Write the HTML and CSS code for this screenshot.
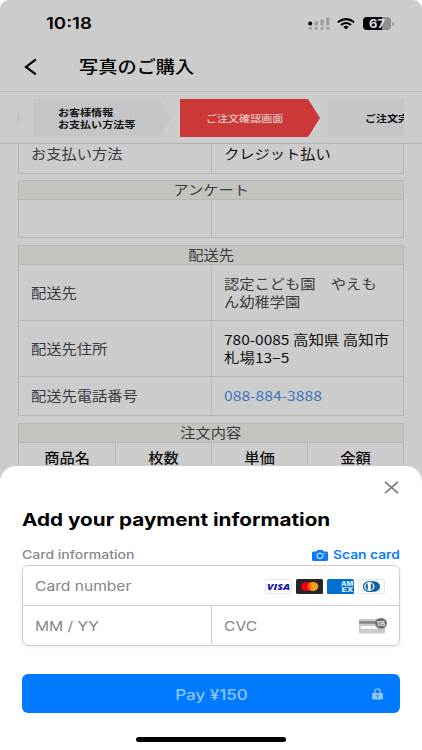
FILE: index.html
```html
<!DOCTYPE html>
<html lang="ja">
<head>
<meta charset="utf-8">
<title>写真のご購入</title>
<link rel="stylesheet" href="styles.css">
</head>
<body>
<div class="phone">
  <div class="page">
    <div class="status">
      <span class="time wide">10:18</span>
      <svg class="signal" width="22" height="14" viewBox="0 0 22 14"><circle cx="2.2" cy="6.4" r="2" fill="#000"/><g fill="#a0a0a0"><rect x="6.5" y="4" width="3.5" height="4.5" rx="1"/><rect x="12.3" y="2.5" width="3.5" height="6" rx="1"/><rect x="18" y=".5" width="3.5" height="8" rx="1"/><rect x=".5" y="10" width="3.5" height="2.7" rx="1"/><rect x="6.5" y="10" width="3.5" height="2.7" rx="1"/><rect x="12.3" y="10" width="3.5" height="2.7" rx="1"/><rect x="18" y="10" width="3.5" height="2.7" rx="1"/></g></svg>
      <svg class="wifi" width="18" height="12" viewBox="0 0 18 12"><g fill="none" stroke="#000" stroke-width="2"><path d="M.8 4.2Q9-2 17.2 4.2"/><path d="M3.9 7Q9 3 14.1 7"/></g><path d="M6.2 8.8Q9 6.7 11.8 8.8L9 11.5Z"/></svg>
      <div class="battery"><span>67</span></div><i class="cap"></i>
    </div>
    <div class="nav">
      <svg width="14" height="18" viewBox="0 0 14 18"><path d="M11.8 1.3 2 9l9.8 7.3" fill="none" stroke="#000" stroke-width="2.2"/></svg>
      <h1 class="wide">写真のご購入</h1>
    </div>
    <div class="steps">
      <div class="tail"></div>
      <div class="step done"><span class="wide">お客様情報<br>お支払い方法等</span></div>
      <div class="step now"><span class="wide">ご注文確認画面</span></div>
      <div class="step next"><span class="wide">ご注文完了</span></div>
    </div>
    <div class="content">
      <div class="grid first"><div class="cell"><span class="wide">お支払い方法</span></div><div class="cell dark"><span class="wide">クレジット払い</span></div></div>
      <div class="caption"><span class="wide">アンケート</span></div>
      <div class="grid empty"><div class="cell"></div><div class="cell"></div></div>
      <div class="caption"><span class="wide">配送先</span></div>
      <div class="grid tall"><div class="cell"><span class="wide">配送先</span></div><div class="cell"><span class="wide">認定こども園　やえも<br>ん幼稚学園</span></div></div>
      <div class="grid tall"><div class="cell"><span class="wide">配送先住所</span></div><div class="cell dark"><span class="wide">780-0085 高知県 高知市<br>札場13−5</span></div></div>
      <div class="grid tel"><div class="cell"><span class="wide">配送先電話番号</span></div><div class="cell link"><span class="wide">088-884-3888</span></div></div>
      <div class="caption"><span class="wide">注文内容</span></div>
      <div class="grid four"><div class="cell"><span class="wide">商品名</span></div><div class="cell"><span class="wide">枚数</span></div><div class="cell"><span class="wide">単価</span></div><div class="cell"><span class="wide">金額</span></div></div>
    </div>
  </div>
  <div class="sheet">
    <div class="close"><svg width="15" height="13" viewBox="0 0 15 13"><path d="M1 .8 14 12.2M14 .8 1 12.2" stroke="#77777b" stroke-width="1.6" fill="none"/></svg></div>
    <h2 class="wide">Add your payment information</h2>
    <div class="label">
      <span class="wide info">Card information</span>
      <span class="scan"><svg width="16" height="11" viewBox="0 0 16 11"><path d="M1.5 1.5H4.2L5.4 0H10.6L11.8 1.5H14.5Q16 1.5 16 3V9.5Q16 11 14.5 11H1.5Q0 11 0 9.5V3Q0 1.5 1.5 1.5Z" fill="#0a7aff"/><ellipse cx="8" cy="5.8" rx="3.1" ry="2.7" fill="none" stroke="#fff" stroke-width="1"/><circle cx="12.7" cy="3.5" r=".6" fill="#fff"/></svg><span class="wide">Scan card</span></span>
    </div>
    <div class="form">
      <div class="field number"><span class="wide">Card number</span>
        <div class="brands">
          <svg width="27" height="15" viewBox="0 0 27 15"><rect x=".5" y=".5" width="26" height="14" rx="1.5" fill="#fff" stroke="#e6e6ec"/><text x="2" y="11" textLength="23" lengthAdjust="spacingAndGlyphs" class="visa">VISA</text></svg>
          <svg width="27" height="15" viewBox="0 0 27 15"><rect width="27" height="15" rx="1.5" fill="#252525"/><ellipse cx="10.3" cy="7.5" rx="5.3" ry="4.6" fill="#eb001b"/><ellipse cx="17" cy="7.5" rx="5.3" ry="4.6" fill="#f79e1b"/><path d="M13.6 3.9Q17.5 7.5 13.6 11.1Q9.7 7.5 13.6 3.9Z" fill="#ff5f00"/></svg>
          <svg width="27" height="15" viewBox="0 0 27 15"><rect width="27" height="15" rx="1.5" fill="#016fd0"/><text x="14" y="6.9" textLength="12.3" lengthAdjust="spacingAndGlyphs" class="amex">AM</text><text x="14.5" y="12.6" textLength="12" lengthAdjust="spacingAndGlyphs" class="amex">EX</text></svg>
          <svg width="27" height="15" viewBox="0 0 27 15"><rect x=".5" y=".5" width="26" height="14" rx="1.5" fill="#fff" stroke="#e6e6ec"/><path d="M12.5 2.2H15C19 2.2 22 4.2 22 7.5S19 12.8 15 12.8H12.5Z" fill="#0862a4"/><ellipse cx="11.3" cy="7.5" rx="5.8" ry="5" fill="#fff" stroke="#0862a4" stroke-width="1.2"/><path d="M9.8 3.7Q5 7.5 9.8 11.3ZM12.8 3.7Q17.6 7.5 12.8 11.3Z" fill="#0862a4"/></svg>
        </div>
      </div>
      <div class="field"><span class="wide">MM / YY</span></div>
      <div class="field cvc"><span class="wide">CVC</span>
        <svg width="28" height="18" viewBox="0 0 28 18"><rect y="2" width="26" height="14.5" rx="1.5" fill="#c9c9c9"/><rect y="4.2" width="20" height="2.5" fill="#858585"/><rect x="1.8" y="9.2" width="16.5" height="2.5" fill="#fff"/><ellipse cx="22" cy="6.2" rx="6" ry="5.2" fill="#6c6c6c"/><text x="17.8" y="8.8" textLength="8.4" lengthAdjust="spacingAndGlyphs" class="code">135</text></svg>
      </div>
    </div>
    <div class="pay"><span class="wide">Pay ¥150</span><svg width="11" height="12" viewBox="0 0 11 12"><path d="M2.8 5.5V3.5C2.8 0 8.2 0 8.2 3.5V5.5" fill="none" stroke="#8fc5ff" stroke-width="1.3"/><rect y="4.9" width="11" height="6.6" rx="1.2" fill="#8fc5ff"/><ellipse cx="5.5" cy="7.6" rx=".9" ry=".8" fill="#007aff"/><path d="M5.1 8H5.9V9.8H5.1Z" fill="#007aff"/></svg></div>
    <div class="home"></div>
  </div>
</div>
</body>
</html>
```
FILE: styles.css
```css
* { box-sizing: border-box; }
body { margin: 0; background: #fff; font-family: Inter, "Noto Sans CJK JP", sans-serif; }
svg { display: block; flex: none; }
.wide { display: inline-block; white-space: nowrap; transform: scaleX(var(--w, 1.15)); transform-origin: left center; }
.phone { width: 422px; height: 750px; overflow: hidden; display: grid; position: relative; background: #fff; }
.page { height: 490px; background: #ccc; border-radius: 9px 9px 0 0; overflow: hidden; }

.status { height: 46px; display: flex; align-items: center; padding: 1px 0 0 46px; }
.time { width: 262px; font-weight: 600; font-size: 15.5px; line-height: 20px; --w: 1.2; transform-origin: left center; }
.wifi { margin-left: 7px; }
.battery { margin-left: 8px; width: 28px; height: 13px; border-radius: 4px; background: linear-gradient(90deg, #000 67%, #8e8e8e 67%); text-align: center; }
.battery span { display: block; font-size: 12px; line-height: 13px; font-weight: 700; color: #e0e0e0; transform: scaleX(1.08); }
.cap { width: 2px; height: 4px; margin-left: 1px; border-radius: 0 2px 2px 0; background: #999; }

.nav { height: 46px; display: flex; align-items: center; padding: 0 0 4px 24px; border-bottom: 1px solid #bababc; }
.nav h1 { margin: 0 0 0 41px; font-size: 17px; line-height: 24px; font-weight: 500; --w: 1.13; }

.steps { height: 52px; padding: 7px 18px 7px 0; display: flex; overflow: hidden; border-bottom: 1px solid #b2b2b4; color: #101010; }
.tail { width: 7px; height: 16px; margin: 11px 9px 0 17px; background: #c4c4c7; clip-path: polygon(0 0, 100% 50%, 0 100%); flex: none; }
.step { height: 38px; flex: none; display: flex; align-items: center; font-size: 9.6px; line-height: 12.5px; font-weight: 700; background: #c5c5c8; clip-path: polygon(0 0, calc(100% - 12px) 0, 100% 50%, calc(100% - 12px) 100%, 0 100%); }
.done { width: 139px; padding: 2px 0 0 25px; }
.now { width: 140px; margin-left: 8px; padding: 3px 0 0 26px; background: #cb3837; color: #e6c8c8; font-weight: 500; }
.next { width: 76px; margin-left: 8px; padding: 3px 0 0 37px; clip-path: inset(0); }

.content { padding: 0 18px; font-family: "Noto Sans CJK JP", sans-serif; font-size: 13.4px; line-height: 18px; color: #3a3b40; --w: 1.14; }
.content .wide { transform: scaleX(var(--w)); }
.grid { display: grid; grid-template-columns: 192px 192px; border: 1px solid #b5b5b9; border-width: 0 1px 1px 1px; }
.cell { display: flex; align-items: center; padding: 0 0 2px 12px; }
.cell + .cell { border-left: 1px solid #b5b5b9; }
.dark, .four { color: #111; }
.dark .wide { --w: 1.155; }
.link { color: #3e78bf; }
.link .wide { --w: 1.17; }
.first { height: 30px; }
.first .cell { padding-bottom: 11px; }
.first .wide { --w: 1.14; }
.caption { height: 20px; margin-top: 7px; padding-bottom: 2px; display: flex; justify-content: center; align-items: center; background: #c4c4bf; border: 1px solid #b5b5b9; }
.first + .caption { margin-top: 6px; }
.caption .wide, .four .wide { transform-origin: center; }
.empty { height: 38px; }
.tall { height: 56px; }
.tel { height: 39px; }
.four { grid-template-columns: 96px 96px 96px 96px; height: 32px; font-weight: 500; }
.four .cell { padding: 0 0 4px; justify-content: center; }

.sheet { position: absolute; left: 0; right: 0; top: 466px; bottom: 0; background: #fff; border-radius: 16px 16px 0 0; padding: 15px 22px 0; }
.close { height: 13px; padding-right: 1px; display: flex; justify-content: flex-end; }
.sheet h2 { margin: 14px 0 0; font-size: 17.5px; line-height: 24px; font-weight: 700; --w: 1.183; }
.label { height: 19px; margin-top: 14px; display: flex; justify-content: space-between; font-size: 11.7px; line-height: 18px; font-weight: 500; color: #86868a; }
.info { --w: 1.2; }
.scan { display: flex; align-items: center; height: 18px; gap: 5px; color: #0a7aff; }
.scan .wide { width: 67px; font-weight: 600; --w: 1.18; }
.form { height: 81px; display: grid; grid-template-columns: 188px 1fr; grid-template-rows: 40px 1fr; border: 1px solid #cfcfd2; border-radius: 6px; box-shadow: 0 1px 4px rgba(0,0,0,.08); font-size: 13px; color: #85858a; }
.field { display: flex; align-items: center; padding-left: 12px; --w: 1.2; }
.number { grid-column: span 2; padding-top: 1px; border-bottom: 1px solid #cfcfd2; justify-content: space-between; padding-right: 14px; }
.brands { display: flex; gap: 4px; }
.cvc { border-left: 1px solid #cfcfd2; justify-content: space-between; padding-right: 12px; }
.visa { font: italic 800 9.5px "Open Sans", sans-serif; fill: #171bb0; }
.amex { font: 800 6.4px Inter, sans-serif; fill: #dcecff; }
.code { font: 700 6.5px Inter, sans-serif; fill: #fff; }
.pay { height: 39px; margin-top: 28px; display: grid; grid-template-columns: 1fr auto 1fr; align-items: center; background: #007aff; border-radius: 6px; color: #8fc5ff; font-size: 14.3px; font-weight: 500; }
.pay .wide { grid-column: 2; transform-origin: center; padding-top: 2px; --w: 1.19; }
.pay svg { justify-self: end; margin-right: 17px; }
.home { width: 150px; height: 5px; margin: 24px auto 0; border-radius: 3px; background: #000; }
```
